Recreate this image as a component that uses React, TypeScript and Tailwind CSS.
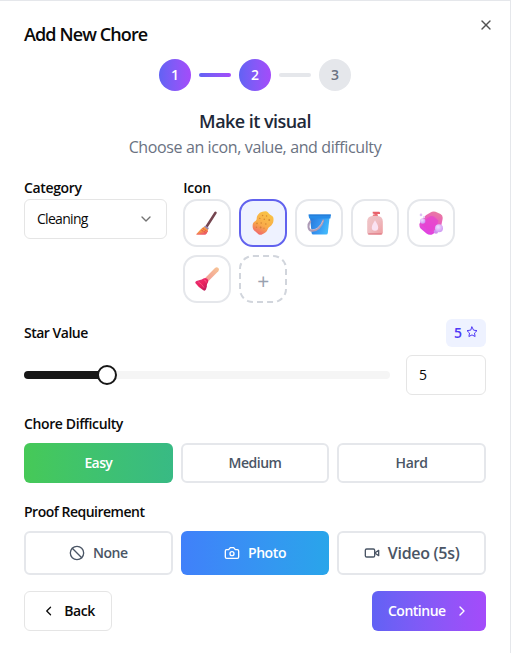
import React from "react";
import { Ban, ChevronDown, ChevronLeft, ChevronRight, X } from "lucide-react";

function Broom() {
  return (
    <svg width="24" height="24" viewBox="0 0 24 24">
      <defs>
        <linearGradient id="broomHead" x1="0" y1="0" x2="0.4" y2="1">
          <stop offset="0" stopColor="#f7a13c" />
          <stop offset="0.6" stopColor="#f59a45" />
          <stop offset="1" stopColor="#ee5a6b" />
        </linearGradient>
      </defs>
      <path d="M20.5 1.8 L12 15" stroke="#75454f" strokeWidth="2.5" strokeLinecap="round" />
      <path d="M10.2 14.6 L13.8 17 L12.8 19.2 L8.6 16.2Z" fill="#9c86ae" />
      <path d="M9 15.8 C6 17.5 4 20.5 1.4 23 C1 23.6 1.4 23.8 2 23.8 H10.4 C11.8 22.8 12.8 21 13 18.8Z" fill="url(#broomHead)" />
      <path d="M7.6 17.4 L12.6 20.6 M6.4 19.2 L11.6 22" stroke="#e34a49" strokeWidth="1" strokeDasharray="1.8 .6" />
    </svg>
  );
}

function Sponge() {
  return (
    <svg width="24" height="24" viewBox="0 0 24 24">
      <defs>
        <linearGradient id="sponge" x1="0.75" y1="0" x2="0.3" y2="1">
          <stop offset="0" stopColor="#f8c545" />
          <stop offset="0.6" stopColor="#f9ab49" />
          <stop offset="1" stopColor="#f0686c" />
        </linearGradient>
      </defs>
      <path d="M7.4 3.2 C9 1 12 .2 14.5 .2 C16.5 .2 17.2 1.8 18.6 3.2 C20 4.6 22.2 4.6 22.4 7 C22.7 9.8 22.5 12.5 20.3 14.4 C18.5 15.8 17.2 16.2 16.6 18.4 C15.9 21 13.2 22 11.3 23.3 C9.5 24.4 7.8 23.6 6.4 22.2 C4.8 20.5 2.2 19.5 1.8 17 C1.4 14.5 1.6 12 3.4 10.8 C5.2 9.6 5.6 9.2 5.7 7.5 C5.8 5.6 6.2 4.6 7.4 3.2Z" fill="url(#sponge)" />
      <g fill="#cf7f2e" opacity=".85">
        <circle cx="11.6" cy="4.5" r=".7" /><circle cx="15.6" cy="5" r=".7" />
        <circle cx="8.8" cy="7.4" r=".7" /><circle cx="13.3" cy="8.3" r=".8" />
        <circle cx="18.2" cy="9" r=".9" /><circle cx="6" cy="12.4" r=".8" />
        <circle cx="10.2" cy="12" r=".8" /><circle cx="14.8" cy="13" r=".8" />
        <circle cx="5.4" cy="16.2" r=".7" /><circle cx="9.6" cy="16.5" r=".9" />
        <circle cx="13" cy="17.2" r=".6" />
      </g>
    </svg>
  );
}

function Bucket() {
  return (
    <svg width="24" height="24" viewBox="0 0 24 24">
      <defs>
        <linearGradient id="bucket" x1="0" y1="0" x2="1" y2="0.3">
          <stop offset="0" stopColor="#2779d8" />
          <stop offset="0.55" stopColor="#3596f3" />
          <stop offset="1" stopColor="#42b7fa" />
        </linearGradient>
      </defs>
      <path d="M3 7 H22.5 L20.8 22 Q20.6 23.5 19.2 23.5 H6.2 Q4.8 23.5 4.6 22Z" fill="url(#bucket)" />
      <path d="M1.4 3.5 H24 L23.4 7.6 H2.2Z" fill="#278be8" />
      <path d="M2.2 4.1 H23.6" stroke="#2677d2" />
      <path d="M3.2 10.5 C.6 13.4 .6 19.2 5 19.8 C10 20.2 14.7 15.5 16.2 9.5" fill="none" stroke="#ad9bb6" strokeWidth="2" strokeLinecap="round" />
      <path d="M3.5 18 C8.2 20.5 13.8 15 15.8 10" fill="none" stroke="#d1bfce" strokeWidth=".8" />
    </svg>
  );
}

function Lotion() {
  return (
    <svg width="24" height="24" viewBox="0 0 24 24">
      <defs>
        <linearGradient id="lotion" x1="0" y1="0" x2="1" y2="1">
          <stop offset="0" stopColor="#f0c5c7" />
          <stop offset="0.5" stopColor="#eebcc1" />
          <stop offset="1" stopColor="#ef9c9f" />
        </linearGradient>
      </defs>
      <path d="M9.7 .7 H16 Q17 .7 17 2 V3 H14.4 V5 H11.5 V3 L9.7 2.6Z" fill="#e8616a" />
      <rect x="9.8" y="3.6" width="5" height="2" rx=".6" fill="#ed7b80" />
      <path d="M4.2 10.5 C4.2 7 6.2 5.2 9.2 5 H14.8 C17.8 5.2 19.8 7 19.8 10.5 V21.5 Q19.8 23.7 17.6 23.7 H6.4 Q4.2 23.7 4.2 21.5Z" fill="url(#lotion)" />
      <path d="M5.2 22.9 H18.8" stroke="#dd7984" strokeWidth="1.1" />
      <path d="M12 9.2 C10.5 12.2 8.8 14 8.8 16.6 A3.2 3.2 0 0 0 15.2 16.6 C15.2 14 13.5 12.2 12 9.2Z" fill="#fae2f2" />
    </svg>
  );
}

function Soap() {
  return (
    <svg width="24" height="24" viewBox="0 0 24 24">
      <defs>
        <linearGradient id="soap" x1="0.75" y1="0" x2="0.35" y2="1">
          <stop offset="0" stopColor="#e97ca0" />
          <stop offset="0.45" stopColor="#e95cc0" />
          <stop offset="1" stopColor="#df3ee6" />
        </linearGradient>
        <radialGradient id="soapBubble" cx=".4" cy=".35" r=".8">
          <stop offset="0" stopColor="#f0dcff" />
          <stop offset="1" stopColor="#c98af0" />
        </radialGradient>
      </defs>
      <path d="M11.5 1.5 Q13.5 .2 16.5 .8 L21.5 3 Q24.2 4.6 23.6 8 L22.4 14 Q20 19.5 14 23 Q10.5 25 7.5 22.4 L1.6 17.5 Q.2 16 .4 13 Q3.5 5.4 11.5 1.5Z" fill="url(#soap)" />
      <path d="M10.4 5.8 Q12.5 4.2 14.8 5.6 L19.4 9.4 Q18.5 15.4 12.7 19.4 Q9.8 20.5 7.5 18 L2.8 14 Q4.8 9 10.4 5.8Z" fill="#e63ed6" opacity=".65" />
      <circle cx="3.7" cy="10" r="2.7" fill="url(#soapBubble)" />
      <circle cx="2" cy="3.9" r="1.3" fill="#dfc0f6" />
      <circle cx="5" cy="6.2" r="1.1" fill="#ead5f8" />
      <circle cx="17" cy="20.6" r="2.2" fill="#cf91ee" />
      <circle cx="20" cy="17.3" r="4" fill="url(#soapBubble)" />
    </svg>
  );
}

function Plunger() {
  return (
    <svg width="24" height="24" viewBox="0 0 24 24">
      <defs>
        <linearGradient id="plungerStick" x1="1" y1="0" x2="0" y2="1">
          <stop offset="0" stopColor="#f7c596" />
          <stop offset="1" stopColor="#f29a96" />
        </linearGradient>
        <linearGradient id="plungerCup" x1="0" y1="0" x2=".8" y2="1">
          <stop offset="0" stopColor="#e0357e" />
          <stop offset=".5" stopColor="#ed245f" />
          <stop offset="1" stopColor="#b91c5b" />
        </linearGradient>
      </defs>
      <path d="M20 1 Q21.8 -.3 23.3 1 Q24.7 2.6 23.3 4.2 L13.6 14 L10.4 10.8Z" fill="url(#plungerStick)" />
      <path d="M8.4 11.6 Q10.5 10.4 12.4 12 Q14 13.8 12.8 15.8 Q11.6 17.4 11.9 19.4 L10.9 22.6 Q10 24.4 8.3 23.3 Q3.4 20.4 .5 16.3 Q-.2 14.7 1.4 13.9 L4.8 13 Q6.9 13 8.4 11.6Z" fill="url(#plungerCup)" />
      <path d="M9 13 Q11.5 13 11.2 15.6 M3.2 14.8 Q7 17 9 20.6" stroke="#ff5284" fill="none" strokeWidth=".9" />
    </svg>
  );
}

function Glyph({ size = 16, width = 2, children }: { size?: number; width?: number; children: React.ReactNode }) {
  return (
    <svg width={size} height={size} viewBox="0 0 24 24" fill="none" stroke="currentColor" strokeWidth={width} strokeLinecap="round" strokeLinejoin="round">
      {children}
    </svg>
  );
}

const icons = [
  { name: "Broom", Art: Broom },
  { name: "Sponge", Art: Sponge },
  { name: "Bucket", Art: Bucket },
  { name: "Lotion", Art: Lotion },
  { name: "Soap", Art: Soap },
  { name: "Plunger", Art: Plunger },
];

const choice = "flex items-center justify-center rounded-md text-sm font-semibold";
const plainChoice = "border-2 border-gray-200 text-gray-600";

export default function App() {
  return (
    <main className="flex h-[653px] w-[511px] flex-col overflow-hidden border-t border-r border-gray-200 bg-white px-6 font-['Open_Sans','Noto_Sans',sans-serif] text-sm text-neutral-950">
      <header className="flex h-[58px] shrink-0 justify-between">
        <h1 className="pt-[19px] text-lg leading-7 font-semibold tracking-[-0.88px]">Add New Chore</h1>
        <button className="-mr-2 mt-4 flex size-4 items-center justify-center self-start text-neutral-600" aria-label="Close">
          <X size={16} strokeWidth={2} />
        </button>
      </header>

      <div className="flex h-8 shrink-0 items-center justify-center gap-2 font-semibold">
        <div className="flex size-8 items-center justify-center rounded-full bg-linear-to-r from-[#6162f4] to-[#a44bfa] text-white">1</div>
        <div className="h-1 w-8 rounded-full bg-linear-to-r from-[#6162f4] to-[#a44bfa]" />
        <div className="flex size-8 items-center justify-center rounded-full bg-linear-to-r from-[#6162f4] to-[#a44bfa] text-white">2</div>
        <div className="h-1 w-8 rounded-full bg-gray-200" />
        <div className="flex size-8 items-center justify-center rounded-full bg-gray-200 text-gray-500">3</div>
      </div>

      <div className="mt-4 flex h-[53px] shrink-0 flex-col items-center">
        <h2 className="text-lg leading-7 font-semibold tracking-[-0.55px] text-gray-800">Make it visual</h2>
        <p className="text-base leading-6 tracking-[-0.38px] text-gray-500">Choose an icon, value, and difficulty</p>
      </div>

      <section className="mt-[21px] grid shrink-0 grid-cols-3 gap-4">
        <div>
          <div className="h-[18px] leading-[14px] font-semibold tracking-[-0.35px]">Category</div>
          <button className="flex h-10 w-full items-center justify-between rounded-md border border-neutral-200 px-3 tracking-[-0.7px]">
            <span>Cleaning</span>
            <ChevronDown size={16} strokeWidth={2} className="text-neutral-500" />
          </button>
        </div>
        <div className="col-span-2">
          <div className="h-[18px] leading-[14px] font-semibold tracking-[-0.25px]">Icon</div>
          <div className="flex flex-wrap gap-2">
            {icons.map(({ name, Art }) => (
              <button
                key={name}
                aria-label={name}
                className={
                  name === "Sponge"
                    ? "flex size-12 items-center justify-center rounded-[14px] border-2 border-[#6162ee] bg-[#eef2ff]"
                    : "flex size-12 items-center justify-center rounded-[14px] border-2 border-gray-200"
                }
              >
                <Art />
              </button>
            ))}
            <button aria-label="Add icon" className="flex size-12 items-center justify-center rounded-[14px] border-2 border-dashed border-gray-300 pt-[5px] text-[21px] leading-none text-gray-400">+</button>
          </div>
        </div>
      </section>

      <section className="mt-4 flex shrink-0 flex-col gap-2">
        <div className="flex h-7 items-center justify-between font-semibold">
          <span className="tracking-[-0.5px]">Star Value</span>
          <span className="flex h-7 w-10 items-center justify-center gap-1 rounded-md bg-indigo-50 text-indigo-600">
            5
            <span className="pb-0.5">
              <Glyph size={12}>
                <path d="M12 2 L15.1 8.3 L22 9.3 L17 14.1 L18.2 21 L12 17.8 L5.8 21 L7 14.1 L2 9.3 L8.9 8.3Z" />
              </Glyph>
            </span>
          </span>
        </div>
        <div className="flex h-10 items-center gap-4">
          <div className="flex h-5 flex-1 items-center">
            <div className="h-2 w-[75px] rounded-l-full bg-neutral-900" />
            <div className="z-10 -mx-0.5 size-5 shrink-0 rounded-full border-2 border-neutral-900 bg-white" />
            <div className="h-2 flex-1 rounded-r-full bg-neutral-100" />
          </div>
          <div className="flex h-10 w-20 items-center rounded-md border border-neutral-200 px-3">5</div>
        </div>
      </section>

      <section className="mt-[19px] shrink-0">
        <div className="h-[29px] leading-5 font-semibold tracking-[-0.38px]">Chore Difficulty</div>
        <div className="grid h-10 grid-cols-3 gap-2">
          <button className={`${choice} bg-linear-to-r from-[#46c957] to-[#38ba84] tracking-[-0.6px] text-white`}>Easy</button>
          <button className={`${choice} ${plainChoice} tracking-[-0.5px]`}>Medium</button>
          <button className={`${choice} ${plainChoice} tracking-[-0.3px]`}>Hard</button>
        </div>
      </section>

      <section className="mt-[19px] shrink-0">
        <div className="h-[29px] leading-5 font-semibold tracking-[-0.5px]">Proof Requirement</div>
        <div className="grid h-11 grid-cols-3 gap-2">
          <button className={`${choice} ${plainChoice} gap-2 tracking-[-0.4px]`}><Ban size={16} strokeWidth={2} />None</button>
          <button className={`${choice} gap-2 bg-linear-to-r from-[#4080fa] to-[#29a5ea] tracking-[-0.4px] text-white`}>
            <Glyph>
              <path d="M14.5 4h-5L7 7H4a2 2 0 0 0-2 2v9a2 2 0 0 0 2 2h16a2 2 0 0 0 2-2V9a2 2 0 0 0-2-2h-3l-2.5-3z" />
              <circle cx="12" cy="13" r="3" />
            </Glyph>
            Photo
          </button>
          <button className={`${choice} ${plainChoice} gap-2`}>
            <Glyph>
              <path d="m22 8-6 4 6 4V8Z" />
              <rect x="2" y="6" width="14" height="12" rx="2" />
            </Glyph>
            <span className="text-base tracking-[-0.3px]">Video (5s)</span>
          </button>
        </div>
      </section>

      <footer className="mt-4 flex h-10 shrink-0 justify-between font-semibold">
        <button className="flex w-[88px] items-center gap-2 rounded-md border border-neutral-200 px-4 tracking-[-0.4px]"><ChevronLeft size={16} />Back</button>
        <button className="flex w-[114px] items-center justify-between rounded-md bg-linear-to-r from-[#6162f4] to-[#a44bfa] px-4 tracking-[-0.5px] text-white"><span>Continue</span><ChevronRight size={16} /></button>
      </footer>
    </main>
  );
}
